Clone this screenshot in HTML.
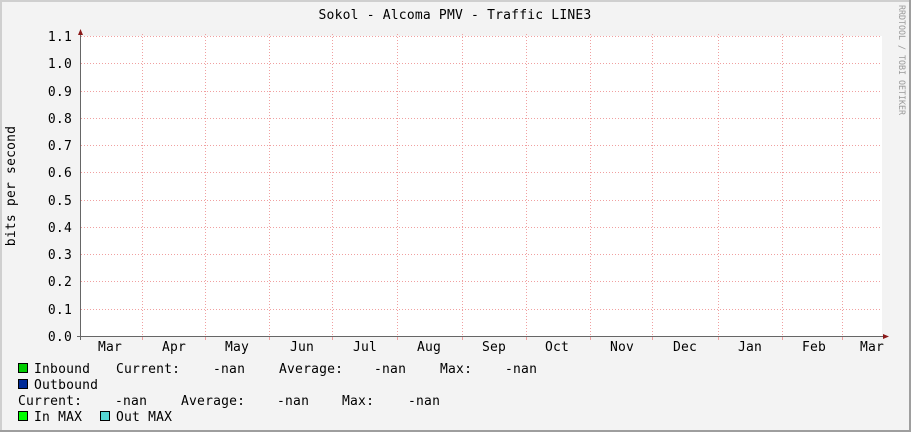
<!DOCTYPE html>
<html><head><meta charset="utf-8"><style>
html,body{margin:0;padding:0;background:#f3f3f3;}
svg{display:block;}
text{font-family:"DejaVu Sans Mono","Liberation Mono",monospace;font-size:13px;fill:#000;letter-spacing:0.2px;}
</style></head><body>
<svg width="911" height="432" xmlns="http://www.w3.org/2000/svg">
<rect x="0" y="0" width="911" height="432" fill="#f3f3f3"/>
<rect x="0" y="0" width="911" height="2" fill="#cfcfcf"/>
<rect x="0" y="0" width="2" height="432" fill="#cfcfcf"/>
<rect x="909" y="0" width="2" height="432" fill="#9e9e9e"/>
<rect x="0" y="430" width="911" height="2" fill="#9e9e9e"/>
<rect x="81" y="36" width="801" height="300" fill="#fff"/>
<g stroke="#f0a0a0" stroke-width="1" stroke-dasharray="1,2">
<line x1="81" y1="36.5" x2="882" y2="36.5"/>
<line x1="81" y1="63.5" x2="882" y2="63.5"/>
<line x1="81" y1="91.5" x2="882" y2="91.5"/>
<line x1="81" y1="118.5" x2="882" y2="118.5"/>
<line x1="81" y1="145.5" x2="882" y2="145.5"/>
<line x1="81" y1="172.5" x2="882" y2="172.5"/>
<line x1="81" y1="200.5" x2="882" y2="200.5"/>
<line x1="81" y1="227.5" x2="882" y2="227.5"/>
<line x1="81" y1="254.5" x2="882" y2="254.5"/>
<line x1="81" y1="281.5" x2="882" y2="281.5"/>
<line x1="81" y1="309.5" x2="882" y2="309.5"/>
<line x1="142.5" y1="34" x2="142.5" y2="336"/>
<line x1="205.5" y1="34" x2="205.5" y2="336"/>
<line x1="269.5" y1="34" x2="269.5" y2="336"/>
<line x1="332.5" y1="34" x2="332.5" y2="336"/>
<line x1="397.5" y1="34" x2="397.5" y2="336"/>
<line x1="462.5" y1="34" x2="462.5" y2="336"/>
<line x1="526.5" y1="34" x2="526.5" y2="336"/>
<line x1="590.5" y1="34" x2="590.5" y2="336"/>
<line x1="652.5" y1="34" x2="652.5" y2="336"/>
<line x1="718.5" y1="34" x2="718.5" y2="336"/>
<line x1="782.5" y1="34" x2="782.5" y2="336"/>
<line x1="842.5" y1="34" x2="842.5" y2="336"/>
</g>
<g stroke="#f0a0a0" stroke-width="1">
<line x1="142.5" y1="336" x2="142.5" y2="340"/><line x1="205.5" y1="336" x2="205.5" y2="340"/>
<line x1="269.5" y1="336" x2="269.5" y2="340"/><line x1="332.5" y1="336" x2="332.5" y2="340"/>
<line x1="397.5" y1="336" x2="397.5" y2="340"/><line x1="462.5" y1="336" x2="462.5" y2="340"/>
<line x1="526.5" y1="336" x2="526.5" y2="340"/><line x1="590.5" y1="336" x2="590.5" y2="340"/>
<line x1="652.5" y1="336" x2="652.5" y2="340"/><line x1="718.5" y1="336" x2="718.5" y2="340"/>
<line x1="782.5" y1="336" x2="782.5" y2="340"/><line x1="842.5" y1="336" x2="842.5" y2="340"/>
</g>
<g stroke="#666" stroke-width="1">
<line x1="77" y1="336.5" x2="884" y2="336.5"/>
<line x1="80.5" y1="340" x2="80.5" y2="32"/>
</g>
<polygon points="78,35 83,35 80.5,29" fill="#8b1a1a"/>
<polygon points="883,334 883,339 889,336.5" fill="#8b1a1a"/>
<text x="455" y="19" text-anchor="middle">Sokol - Alcoma PMV - Traffic LINE3</text>
<g text-anchor="end">
<text x="72" y="41">1.1</text><text x="72" y="68">1.0</text><text x="72" y="96">0.9</text>
<text x="72" y="123">0.8</text><text x="72" y="150">0.7</text><text x="72" y="177">0.6</text>
<text x="72" y="205">0.5</text><text x="72" y="232">0.4</text><text x="72" y="259">0.3</text>
<text x="72" y="286">0.2</text><text x="72" y="314">0.1</text><text x="72" y="341">0.0</text>
</g>
<g text-anchor="middle">
<text x="110" y="351">Mar</text><text x="174" y="351">Apr</text><text x="237" y="351">May</text>
<text x="302" y="351">Jun</text><text x="365" y="351">Jul</text><text x="429" y="351">Aug</text>
<text x="494" y="351">Sep</text><text x="557" y="351">Oct</text><text x="622" y="351">Nov</text>
<text x="685" y="351">Dec</text><text x="750" y="351">Jan</text><text x="814" y="351">Feb</text>
<text x="872" y="351">Mar</text>
</g>
<text transform="translate(15,186) rotate(-90)" text-anchor="middle">bits per second</text>
<text transform="translate(899,5) rotate(90)" textLength="110" lengthAdjust="spacingAndGlyphs" style="font-size:8.5px;fill:#999;letter-spacing:0">RRDTOOL / TOBI OETIKER</text>
<rect x="18.5" y="363.5" width="9" height="9" fill="#00cc00" stroke="#000"/>
<text x="34" y="373">Inbound</text>
<text x="116" y="373">Current:</text><text x="213" y="373">-nan</text>
<text x="279" y="373">Average:</text><text x="374" y="373">-nan</text>
<text x="440" y="373">Max:</text><text x="505" y="373">-nan</text>
<rect x="18.5" y="379.5" width="9" height="9" fill="#002a97" stroke="#000"/>
<text x="34" y="389">Outbound</text>
<text x="18" y="405">Current:</text><text x="115" y="405">-nan</text>
<text x="181" y="405">Average:</text><text x="277" y="405">-nan</text>
<text x="342" y="405">Max:</text><text x="408" y="405">-nan</text>
<rect x="18.5" y="411.5" width="9" height="9" fill="#00ff00" stroke="#000"/>
<text x="34" y="421">In MAX</text>
<rect x="100.5" y="411.5" width="9" height="9" fill="#55d6d3" stroke="#000"/>
<text x="116" y="421">Out MAX</text>
</svg>
</body></html>
